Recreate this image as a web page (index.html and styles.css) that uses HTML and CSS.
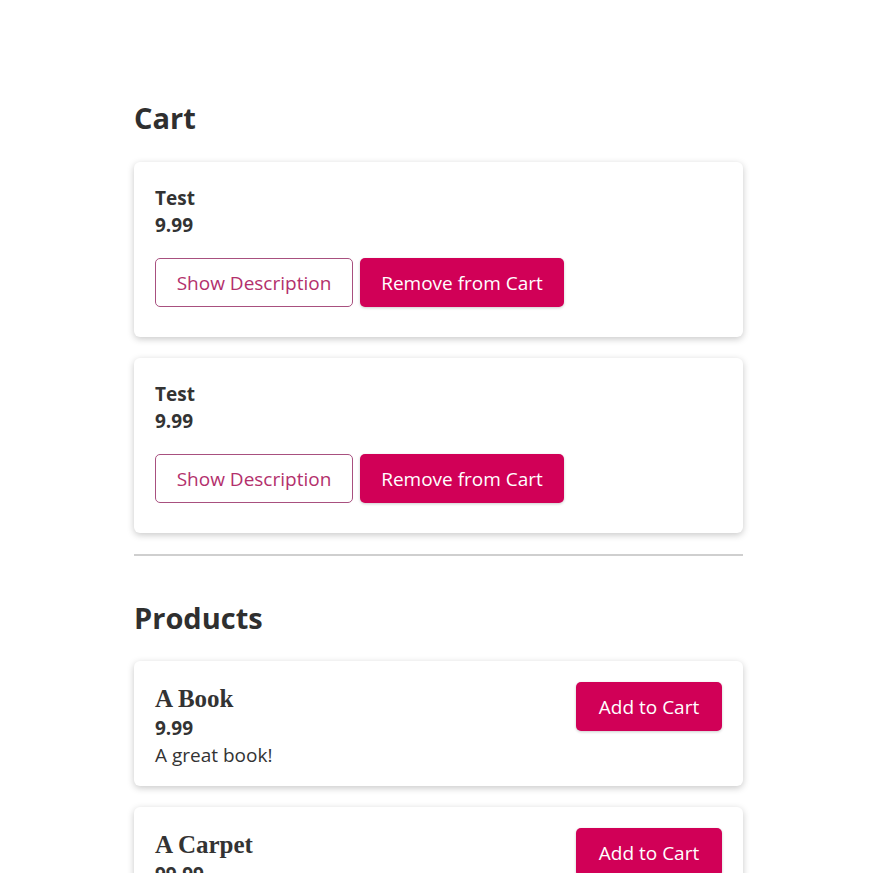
FILE: index.html
```html
<!DOCTYPE html>
<html>
<head>
<meta charset="utf-8">
<link rel="stylesheet" href="styles.css">
</head>
<body>
<main class="page">
  <section class="section">
    <h2 class="heading">Cart</h2>
    <div class="card cart-card">
      <div class="name">Test</div>
      <div class="price">9.99</div>
      <div class="actions">
        <button class="btn btn-outline">Show Description</button>
        <button class="btn btn-primary">Remove from Cart</button>
      </div>
    </div>
    <div class="card cart-card">
      <div class="name">Test</div>
      <div class="price">9.99</div>
      <div class="actions">
        <button class="btn btn-outline">Show Description</button>
        <button class="btn btn-primary">Remove from Cart</button>
      </div>
    </div>
  </section>
  <hr class="divider">
  <section class="section">
    <h2 class="heading heading-products">Products</h2>
    <div class="card product-card">
      <div class="info">
        <h3 class="title">A Book</h3>
        <div class="price">9.99</div>
        <div class="desc">A great book!</div>
      </div>
      <button class="btn btn-primary">Add to Cart</button>
    </div>
    <div class="card product-card">
      <div class="info">
        <h3 class="title">A Carpet</h3>
        <div class="price">99.99</div>
        <div class="desc">A soft carpet</div>
      </div>
      <button class="btn btn-primary">Add to Cart</button>
    </div>
  </section>
</main>
</body>
</html>
```
FILE: styles.css
```css
html, body {
  margin: 0;
  padding: 0;
  background: #ffffff;
}
body {
  font-family: "Open Sans", "Noto Sans", sans-serif;
  color: #333333;
}
.page {
  width: 609px;
  margin-left: 134px;
  padding-top: 100px;
}
.heading {
  font-size: 29px;
  font-weight: 700;
  line-height: 36px;
  margin: 0 0 26px 0;
  color: #2f2f2f;
}
.heading-products {
  margin-bottom: 25px;
}
.card {
  background: #fff;
  border-radius: 6px;
  box-shadow: 0 2px 7px rgba(0, 0, 0, 0.22);
  margin-bottom: 21px;
  box-sizing: border-box;
}
.cart-card {
  padding: 23px 21px 30px 21px;
  height: 175px;
}
.name, .price {
  font-size: 19px;
  font-weight: 700;
  line-height: 27px;
  color: #333;
}
.actions {
  display: flex;
  gap: 7px;
  margin-top: 19px;
}
.btn {
  font-family: "Open Sans", "Noto Sans", sans-serif;
  font-size: 19px;
  height: 49px;
  padding: 0 20px;
  border-radius: 5px;
  cursor: pointer;
  box-sizing: border-box;
}
.btn-outline {
  background: #fff;
  color: #b3306c;
  border: 1px solid #a8507f;
  width: 198px;
}
.btn-primary {
  background: #d10057;
  color: #fff;
  border: none;
  box-shadow: 0 1px 3px rgba(0, 0, 0, 0.2);
}
.cart-card .btn-primary {
  width: 204px;
}
.divider {
  border: none;
  border-top: 2px solid #cfcfcf;
  margin: 0 0 44px 0;
}
.product-card {
  display: flex;
  justify-content: space-between;
  align-items: flex-start;
  padding: 21px 21px 20px 21px;
  height: 125px;
}
.info {
  padding-top: 1px;
}
.title {
  font-family: "Liberation Serif", "Times New Roman", serif;
  font-size: 25px;
  font-weight: 700;
  line-height: 31px;
  margin: 0;
  color: #333;
}
.product-card .price {
  line-height: 28px;
}
.desc {
  font-size: 19px;
  line-height: 27px;
  color: #333;
}
.product-card .btn-primary {
  width: 146px;
  padding: 0;
}
```
